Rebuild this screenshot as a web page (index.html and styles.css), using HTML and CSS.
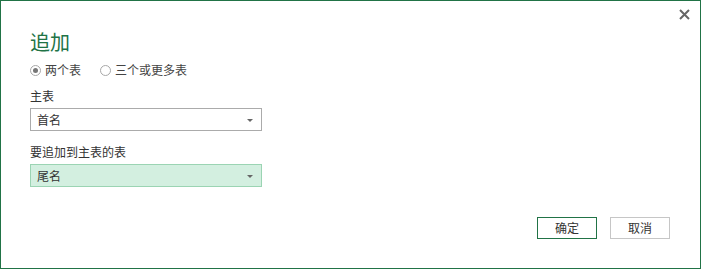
FILE: index.html
```html
<!DOCTYPE html>
<html lang="zh-CN">
<head>
<meta charset="utf-8">
<title>追加</title>
<link rel="stylesheet" href="styles.css">
</head>
<body>
<div class="dialog">
  <div class="topbar">
    <button class="close" aria-label="关闭">
      <svg width="11" height="11" viewBox="0 0 11 11"><path d="M1 1L10 10M10 1L1 10" stroke="#666" stroke-width="2" fill="none"/></svg>
    </button>
  </div>
  <div class="content">
    <h1 class="title">追加</h1>
    <div class="radios">
      <label class="radio"><span class="dot checked"></span><span>两个表</span></label>
      <label class="radio"><span class="dot"></span><span>三个或更多表</span></label>
    </div>
    <div class="label first">主表</div>
    <div class="select">
      <span>首名</span>
      <span class="arrow"></span>
    </div>
    <div class="label second">要追加到主表的表</div>
    <div class="select active">
      <span>尾名</span>
      <span class="arrow"></span>
    </div>
  </div>
  <div class="footer">
    <button class="btn primary">确定</button>
    <button class="btn">取消</button>
  </div>
</div>
</body>
</html>
```
FILE: styles.css
```css
* { box-sizing: border-box; }
html, body { margin: 0; padding: 0; background: #fff; }
body {
  font-family: "Noto Sans CJK SC", "Microsoft YaHei", sans-serif;
  font-size: 12px;
  color: #333;
}
.dialog {
  width: 701px;
  height: 269px;
  border: 1px solid #217346;
  display: flex;
  flex-direction: column;
}
.topbar {
  display: flex;
  justify-content: flex-end;
  padding: 7px 10px 0 0;
  height: 20px;
}
.close {
  border: 0;
  background: none;
  padding: 0;
  width: 12px;
  height: 12px;
  display: flex;
  align-items: center;
  justify-content: center;
}
.content {
  padding: 0 0 0 29px;
  display: flex;
  flex-direction: column;
}
.title {
  margin: 8px 0 0 0;
  font-size: 20px;
  font-weight: normal;
  line-height: 26px;
  color: #217346;
}
.radios {
  display: flex;
  gap: 19px;
  margin-top: 7px;
  height: 16px;
  align-items: center;
}
.radio {
  display: flex;
  align-items: center;
  gap: 4px;
  color: #444;
  line-height: 16px;
}
.dot {
  width: 11px;
  height: 11px;
  border: 1px solid #a8a8a8;
  border-radius: 50%;
  background: #fff;
  display: flex;
  align-items: center;
  justify-content: center;
}
.dot.checked::after {
  content: "";
  width: 5px;
  height: 5px;
  border-radius: 50%;
  background: #777;
}
.label {
  line-height: 16px;
  color: #333;
}
.label.first { margin-top: 10px; }
.label.second { margin-top: 13px; }
.select {
  width: 232px;
  height: 23px;
  border: 1px solid #ababab;
  background: #fff;
  margin-top: 4px;
  display: flex;
  align-items: center;
  justify-content: space-between;
  padding: 0 8px 0 6px;
  color: #333;
  font-size: 12px;
}
.select.active {
  background: #d3efe0;
  border-color: #9bd4b3;
}
.arrow {
  width: 0;
  height: 0;
  border-left: 3px solid transparent;
  border-right: 3px solid transparent;
  border-top: 3px solid #666;
  margin-top: 1px;
}
.footer {
  margin-top: auto;
  display: flex;
  justify-content: flex-end;
  gap: 13px;
  padding: 0 30px 29px 0;
}
.btn {
  width: 60px;
  height: 22px;
  border: 1px solid #c6c6c6;
  background: #fff;
  font-family: inherit;
  font-size: 12px;
  color: #333;
  padding: 0;
  line-height: 18px;
}
.btn.primary {
  border-color: #217346;
}
```
